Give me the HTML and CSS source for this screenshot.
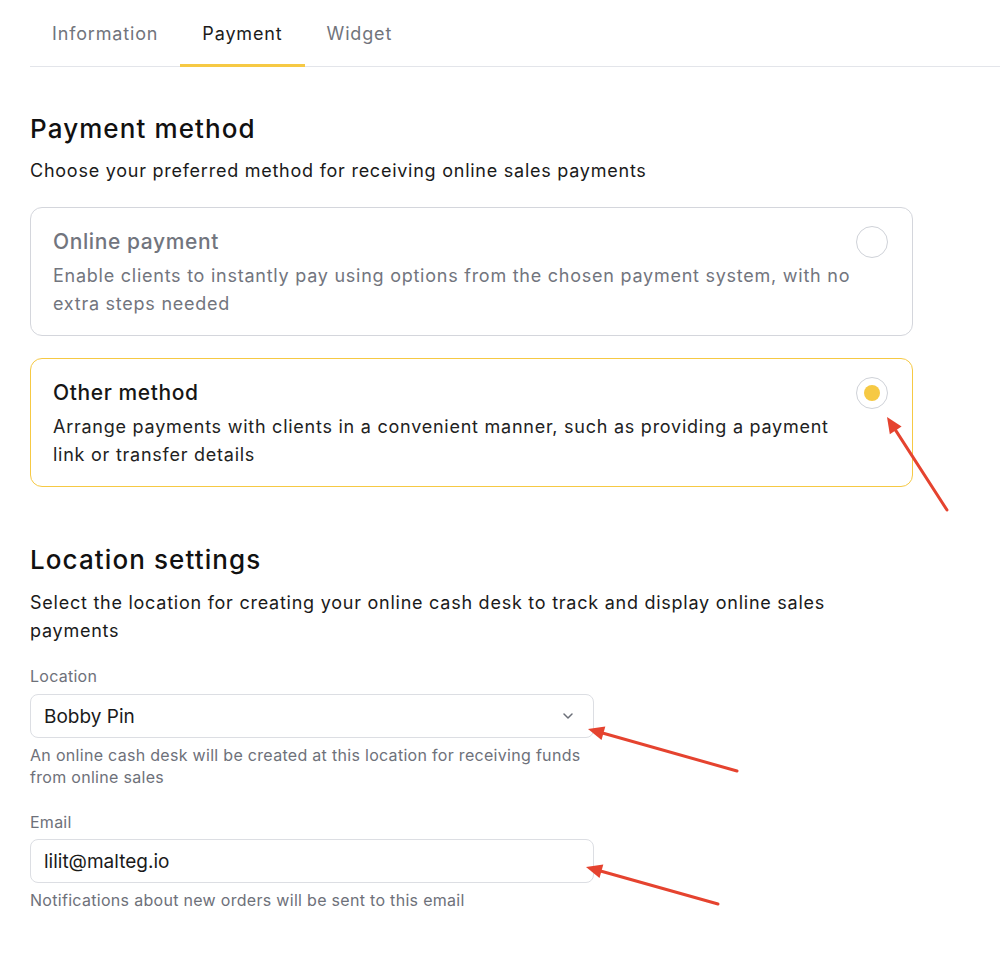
FILE: index.html
```html
<!DOCTYPE html>
<html lang="en">
<head>
  <meta charset="UTF-8" />
  <meta name="viewport" content="width=device-width, initial-scale=1.0"/>
  <title>Payment settings</title>
  <link rel="stylesheet" href="styles.css">
</head>
<body>
  <div class="page">
    <div class="tabs">
      <div class="tab">Information</div>
      <div class="tab active">Payment</div>
      <div class="tab">Widget</div>
    </div>

    <div class="section">
      <h2 class="section-title">Payment method</h2>
      <p class="section-desc">Choose your preferred method for receiving online sales payments</p>

      <div class="method-card">
        <div class="method-text">
          <div class="method-title">Online payment</div>
          <div class="method-desc">Enable clients to instantly pay using options from the chosen payment system, with no extra steps needed</div>
        </div>
        <span class="radio"></span>
      </div>

      <div class="method-card selected">
        <div class="method-text">
          <div class="method-title">Other method</div>
          <div class="method-desc">Arrange payments with clients in a convenient manner, such as providing a payment link or transfer details</div>
        </div>
        <span class="radio checked"></span>
      </div>
    </div>

    <div class="section location">
      <h2 class="section-title">Location settings</h2>
      <p class="section-desc">Select the location for creating your online cash desk to track and display online sales payments</p>

      <div class="field">
        <label class="field-label">Location</label>
        <div class="field-box">
          <span>Bobby Pin</span>
          <svg class="chevron" width="12" height="8" viewBox="0 0 12 8"><path d="M2 2l4 4 4-4" fill="none" stroke="#6b6f78" stroke-width="1.5" stroke-linecap="round" stroke-linejoin="round"/></svg>
        </div>
        <div class="field-hint">An online cash desk will be created at this location for receiving funds from online sales</div>
      </div>

      <div class="field">
        <label class="field-label">Email</label>
        <div class="field-box">
          <span>lilit@malteg.io</span>
        </div>
        <div class="field-hint">Notifications about new orders will be sent to this email</div>
      </div>
    </div>
  </div>

  <!-- annotation arrows -->
  <svg class="marks" width="1000" height="969" viewBox="0 0 1000 969">
    <g stroke="#e5432f" stroke-width="3" stroke-linecap="round" fill="#e5432f">
      <line x1="947" y1="510" x2="895.7" y2="430.4"/>
      <polygon stroke="none" points="887,417 901.6,426.6 889.8,434.2"/>
      <line x1="737" y1="771" x2="603.4" y2="733.3"/>
      <polygon stroke="none" points="588,729 605.3,726.6 601.5,740"/>
      <line x1="718" y1="904" x2="601.4" y2="871.3"/>
      <polygon stroke="none" points="586,867 603.3,864.6 599.5,878"/>
    </g>
  </svg>
</body>
</html>
```

FILE: styles.css
```css
body {
  margin: 0;
  font-family: Inter, "Noto Sans", sans-serif;
  background-color: #ffffff;
  color: #141414;
}

.page {
  padding-left: 30px;
}

.tabs {
  display: flex;
  border-bottom: 1px solid #e3e5ea;
}

.tab {
  padding: 22px 22px 18px;
  font-size: 18px;
  line-height: 24px;
  letter-spacing: 0.85px;
  color: #71747c;
  border-bottom: 3px solid transparent;
  margin-bottom: -1px;
}

.tab.active {
  color: #1c1c1c;
  border-bottom-color: #f6c944;
}

.section {
  width: 883px;
}

.section-title {
  margin: 46px 0 0;
  font-size: 26px;
  line-height: 32px;
  font-weight: 500;
  letter-spacing: 1.1px;
  color: #111111;
}

.section-desc {
  margin: 12px 0 0;
  font-size: 18px;
  line-height: 28px;
  letter-spacing: 0.75px;
  max-width: 820px;
  color: #1a1a1a;
}

.method-card {
  display: flex;
  align-items: flex-start;
  margin-top: 22px;
  padding: 20px 24px 17px 22px;
  border: 1px solid #d4d6dc;
  border-radius: 12px;
}

.method-card + .method-card {
  margin-top: 22px;
}

.method-card.selected {
  border-color: #f6c944;
}

.method-text {
  flex: 1;
}

.method-title {
  font-size: 21px;
  line-height: 28px;
  font-weight: 500;
  letter-spacing: 0.6px;
  color: #72757e;
}

.method-desc {
  margin-top: 6px;
  font-size: 18px;
  line-height: 28px;
  letter-spacing: 0.75px;
  color: #72757e;
}

.selected .method-desc {
  color: #222222;
}

.selected .method-title {
  color: #161616;
}

.radio {
  flex: none;
  width: 30px;
  height: 30px;
  margin-top: -2px;
  border: 1px solid #cfd2d8;
  border-radius: 50%;
  display: flex;
  align-items: center;
  justify-content: center;
}

.radio.checked::after {
  content: "";
  width: 16px;
  height: 16px;
  border-radius: 50%;
  background-color: #f6c944;
}

.location .section-title {
  margin-top: 57px;
}

.location .section-desc {
  margin-top: 13px;
}

.field {
  width: 564px;
  margin-top: 23px;
}

.location .section-desc + .field {
  margin-top: 20px;
}

.field-label {
  display: block;
  font-size: 16px;
  line-height: 22px;
  letter-spacing: 0.25px;
  color: #6e717a;
}

.field-box {
  display: flex;
  align-items: center;
  justify-content: space-between;
  height: 42px;
  margin-top: 7px;
  padding: 0 19px 0 13px;
  border: 1px solid #dcdee3;
  border-radius: 8px;
  font-size: 19px;
  color: #1a1a1a;
}

.field + .field .field-box {
  margin-top: 6px;
}

.field-hint {
  margin-top: 6px;
  font-size: 16px;
  line-height: 22px;
  letter-spacing: 0.3px;
  color: #6e717a;
}

.marks {
  position: absolute;
  top: 0;
  left: 0;
  pointer-events: none;
}
```
